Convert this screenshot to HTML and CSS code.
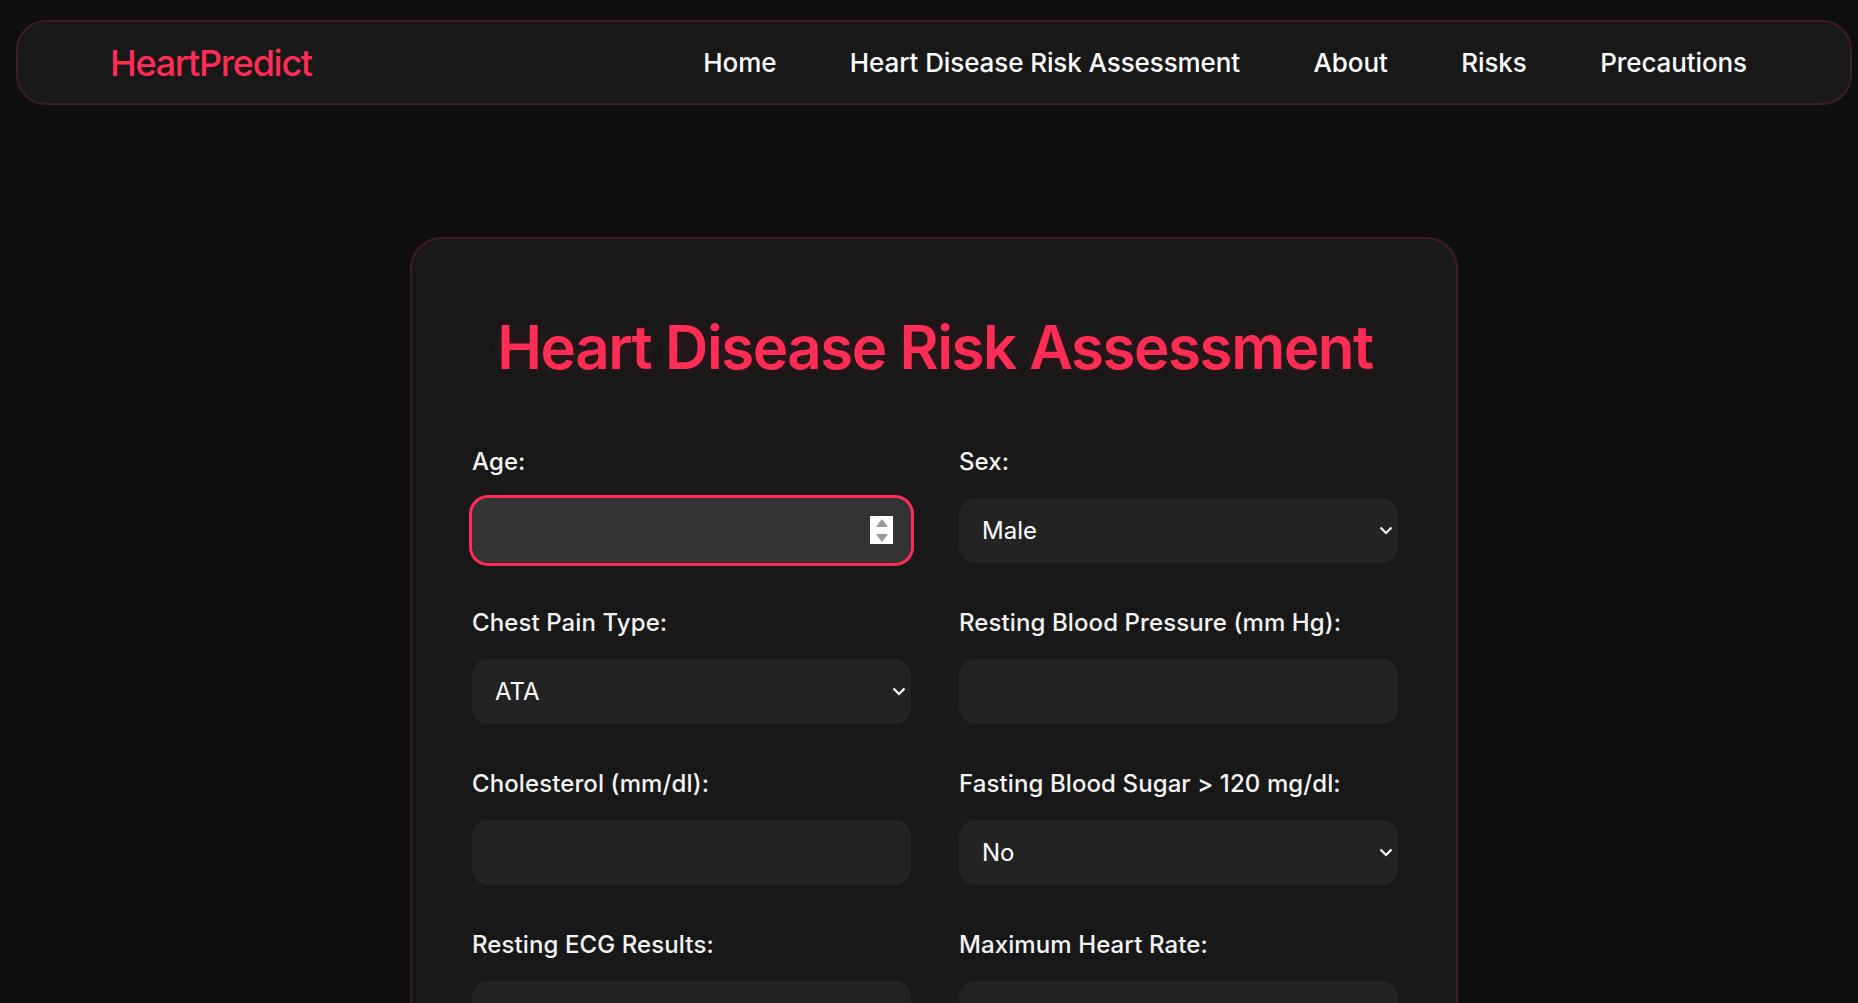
FILE: index.html
```html
<!DOCTYPE html>
<html lang="en">
<head>
<meta charset="utf-8">
<title>HeartPredict</title>
<link rel="stylesheet" href="styles.css">
</head>
<body>
<nav class="navbar">
  <a class="logo" href="#">HeartPredict</a>
  <ul class="nav-links">
    <li><a href="#">Home</a></li>
    <li><a href="#">Heart Disease Risk Assessment</a></li>
    <li><a href="#">About</a></li>
    <li><a href="#">Risks</a></li>
    <li><a href="#">Precautions</a></li>
  </ul>
</nav>
<main class="main">
  <section class="card">
    <h1 class="title">Heart Disease Risk Assessment</h1>
    <form class="form-grid">
      <div class="field">
        <label class="label" for="age">Age:</label>
        <div class="control">
          <input class="input input-focused" id="age" type="text">
          <span class="spinner"><span class="tri-up"></span><span class="tri-down"></span></span>
        </div>
      </div>
      <div class="field">
        <label class="label" for="sex">Sex:</label>
        <div class="control">
          <select class="input select" id="sex"><option>Male</option><option>Female</option></select>
          <svg class="chevron" width="14" height="9" viewBox="0 0 14 9"><path d="M1.5 1.5 L7 7 L12.5 1.5" fill="none" stroke="#ffffff" stroke-width="2.2"/></svg>
        </div>
      </div>
      <div class="field">
        <label class="label" for="cp">Chest Pain Type:</label>
        <div class="control">
          <select class="input select" id="cp"><option>ATA</option><option>NAP</option><option>ASY</option><option>TA</option></select>
          <svg class="chevron" width="14" height="9" viewBox="0 0 14 9"><path d="M1.5 1.5 L7 7 L12.5 1.5" fill="none" stroke="#ffffff" stroke-width="2.2"/></svg>
        </div>
      </div>
      <div class="field">
        <label class="label" for="bp">Resting Blood Pressure (mm Hg):</label>
        <div class="control"><input class="input" id="bp" type="text"></div>
      </div>
      <div class="field">
        <label class="label" for="chol">Cholesterol (mm/dl):</label>
        <div class="control"><input class="input" id="chol" type="text"></div>
      </div>
      <div class="field">
        <label class="label" for="fbs">Fasting Blood Sugar &gt; 120 mg/dl:</label>
        <div class="control">
          <select class="input select" id="fbs"><option>No</option><option>Yes</option></select>
          <svg class="chevron" width="14" height="9" viewBox="0 0 14 9"><path d="M1.5 1.5 L7 7 L12.5 1.5" fill="none" stroke="#ffffff" stroke-width="2.2"/></svg>
        </div>
      </div>
      <div class="field">
        <label class="label" for="ecg">Resting ECG Results:</label>
        <div class="control">
          <select class="input select" id="ecg"><option>Normal</option><option>ST</option><option>LVH</option></select>
          <svg class="chevron" width="14" height="9" viewBox="0 0 14 9"><path d="M1.5 1.5 L7 7 L12.5 1.5" fill="none" stroke="#ffffff" stroke-width="2.2"/></svg>
        </div>
      </div>
      <div class="field">
        <label class="label" for="hr">Maximum Heart Rate:</label>
        <div class="control"><input class="input" id="hr" type="text"></div>
      </div>
    </form>
  </section>
</main>
</body>
</html>
```
FILE: styles.css
```css
* { box-sizing: border-box; }

body {
  margin: 0;
  background: #0f0f0f;
  color: #ffffff;
  font-family: Inter, "Noto Sans", "Liberation Sans", sans-serif;
}

.navbar {
  display: flex;
  align-items: center;
  justify-content: space-between;
  height: 85px;
  margin: 20px 6px 0 16px;
  padding: 0 103px 0 92px;
  background: #181818;
  border: 2px solid #3f1b24;
  border-radius: 30px;
}

.logo {
  color: #ff2d55;
  text-decoration: none;
  font-size: 36px;
  font-weight: 500;
  letter-spacing: -1.3px;
}

.nav-links {
  display: flex;
  gap: 73.5px;
  list-style: none;
  margin: 0;
  padding: 0;
}

.nav-links a {
  color: #ffffff;
  text-decoration: none;
  font-size: 26px;
  font-weight: 500;
  letter-spacing: -0.1px;
}

.main {
  padding: 132px 0 60px;
}

.card {
  width: 1048px;
  margin-left: calc(50% - 519px);
  padding: 60px 58px 60px 60px;
  background: #181818;
  border: 2px solid #3f1b24;
  border-radius: 32px;
}

.title {
  margin: 12px 0 61px;
  text-align: center;
  color: #ff2d55;
  font-size: 60px;
  line-height: 1.2;
  font-weight: 600;
  letter-spacing: -1.45px;
  text-shadow: 0 0 18px rgba(255, 45, 85, 0.12);
}

.form-grid {
  display: grid;
  grid-template-columns: 439px 439px;
  column-gap: 48px;
  row-gap: 42px;
}

.label {
  display: block;
  margin-bottom: 18px;
  font-size: 24px;
  line-height: 36px;
  font-weight: 500;
  letter-spacing: 0.1px;
  color: #f4f4f4;
}

.control {
  position: relative;
}

.input {
  display: block;
  width: 100%;
  height: 65px;
  padding: 0 23px;
  border: none;
  border-radius: 16px;
  background: #232323;
  color: #ffffff;
  font-family: inherit;
  font-size: 24px;
  outline: none;
}

.select {
  appearance: none;
  -webkit-appearance: none;
}

.input-focused {
  background: #333333;
  box-shadow: 0 0 0 3px #ff2d55;
}

.chevron {
  position: absolute;
  right: 5px;
  top: 28px;
  pointer-events: none;
}

.spinner {
  position: absolute;
  right: 18px;
  top: 18px;
  width: 23px;
  height: 28px;
  background: #ffffff;
  display: flex;
  flex-direction: column;
  align-items: center;
  justify-content: center;
  gap: 7px;
}

.tri-up {
  width: 0;
  height: 0;
  border-left: 6px solid transparent;
  border-right: 6px solid transparent;
  border-bottom: 8px solid #9a9a9a;
}

.tri-down {
  width: 0;
  height: 0;
  border-left: 6px solid transparent;
  border-right: 6px solid transparent;
  border-top: 8px solid #9a9a9a;
}
```
